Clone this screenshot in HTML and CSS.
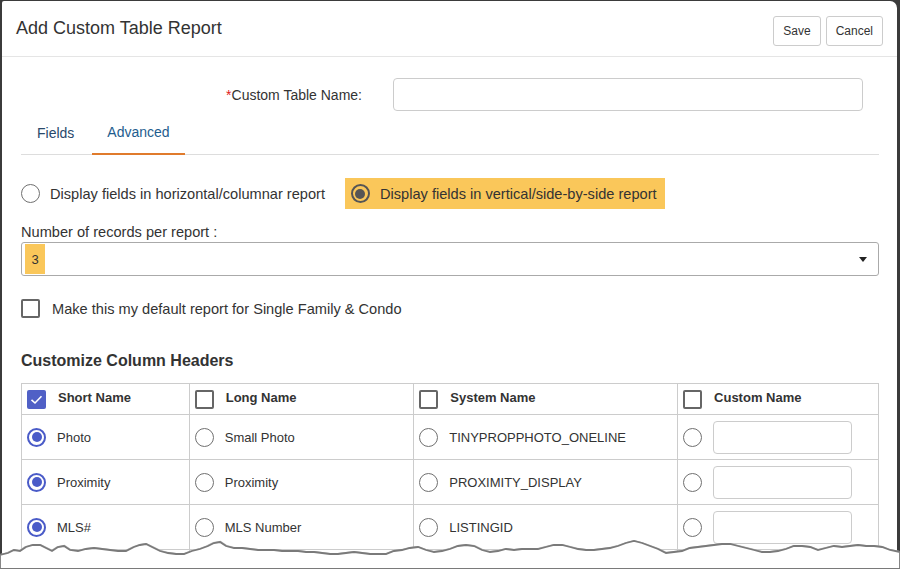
FILE: index.html
```html
<!DOCTYPE html>
<html>
<head>
<meta charset="utf-8">
<link rel="stylesheet" href="styles.css">
</head>
<body>
<div class="frame">
  <div class="modal">
    <div class="modal-header">
      <h1 class="title">Add Custom Table Report</h1>
      <div class="actions">
        <button class="btn">Save</button>
        <button class="btn">Cancel</button>
      </div>
    </div>
    <div class="modal-body">
      <div class="name-row">
        <label class="name-label"><span class="req">*</span>Custom Table Name:</label>
        <input class="text-input name-input" type="text">
      </div>
      <div class="tabs">
        <div class="tab">Fields</div>
        <div class="tab active">Advanced</div>
      </div>
      <div class="layout-row">
        <div class="option"><span class="radio"></span><span>Display fields in horizontal/columnar report</span></div>
        <div class="option hl"><span class="radio dark"></span><span>Display fields in vertical/side-by-side report</span></div>
      </div>
      <div class="records-label">Number of records per report :</div>
      <div class="select">
        <span class="sel-val">3</span>
        <span class="caret"></span>
      </div>
      <div class="default-row">
        <span class="checkbox"></span>
        <span>Make this my default report for Single Family &amp; Condo</span>
      </div>
      <h2 class="section-title">Customize Column Headers</h2>
      <table class="grid">
        <colgroup>
          <col class="c1"><col class="c2"><col class="c3"><col class="c4">
        </colgroup>
        <tr class="head">
          <th><div class="cell"><span class="checkbox checked"><svg viewBox="0 0 19 19" width="19" height="19"><path d="M4.5 9.8 L8 13 L14.5 6.2" fill="none" stroke="#fff" stroke-width="1.6"/></svg></span><span class="htext">Short Name</span></div></th>
          <th><div class="cell"><span class="checkbox"></span><span class="htext">Long Name</span></div></th>
          <th><div class="cell"><span class="checkbox"></span><span class="htext">System Name</span></div></th>
          <th><div class="cell"><span class="checkbox"></span><span class="htext">Custom Name</span></div></th>
        </tr>
        <tr>
          <td><div class="cell"><span class="radio blue"></span><span>Photo</span></div></td>
          <td><div class="cell"><span class="radio"></span><span>Small Photo</span></div></td>
          <td><div class="cell"><span class="radio"></span><span>TINYPROPPHOTO_ONELINE</span></div></td>
          <td><div class="cell"><span class="radio"></span><input class="text-input custom-input" type="text"></div></td>
        </tr>
        <tr>
          <td><div class="cell"><span class="radio blue"></span><span>Proximity</span></div></td>
          <td><div class="cell"><span class="radio"></span><span>Proximity</span></div></td>
          <td><div class="cell"><span class="radio"></span><span>PROXIMITY_DISPLAY</span></div></td>
          <td><div class="cell"><span class="radio"></span><input class="text-input custom-input" type="text"></div></td>
        </tr>
        <tr>
          <td><div class="cell"><span class="radio blue"></span><span>MLS#</span></div></td>
          <td><div class="cell"><span class="radio"></span><span>MLS Number</span></div></td>
          <td><div class="cell"><span class="radio"></span><span>LISTINGID</span></div></td>
          <td><div class="cell"><span class="radio"></span><input class="text-input custom-input" type="text"></div></td>
        </tr>
        <tr>
          <td><div class="cell"></div></td>
          <td><div class="cell"></div></td>
          <td><div class="cell"></div></td>
          <td><div class="cell"></div></td>
        </tr>
      </table>
    </div>
  </div>
  <svg class="torn" viewBox="0 0 900 40" width="900" height="40" preserveAspectRatio="none">
    <polyline class="shadow2" points="0,26 8,24 14,21 20,22 26,18 33,16 40,16 46,19 52,22 58,18 64,17 70,21 78,22 86,20 94,19 102,20 110,21 118,22 126,22 134,18 140,16 146,15 152,18 160,22 168,24 176,25 184,25 192,22 200,20 208,17 214,14 220,13 226,17 234,19 242,19 250,20 258,21 266,21 274,21 282,22 290,22 298,22 306,23 314,23 322,24 330,25 338,25 346,24 354,23 362,24 370,25 378,25 386,25 394,22 402,21 410,19 418,18 426,21 434,23 442,22 450,20 458,17 466,16 474,17 482,21 490,23 498,22 506,20 514,21 522,20 530,20 538,20 546,18 554,16 562,16 570,18 578,20 586,21 594,21 602,20 610,19 618,17 626,14 634,12 642,14 650,17 658,20 666,24 674,23 682,22 690,19 698,18 706,17 714,16 722,15 730,15 738,17 746,19 754,21 762,23 770,23 778,22 786,20 794,17 802,17 810,18 818,21 826,19 834,17 842,18 850,17 858,16 866,17 874,17 882,18 890,21 900,23"/>
    <polygon class="paper" points="0,26 8,24 14,21 20,22 26,18 33,16 40,16 46,19 52,22 58,18 64,17 70,21 78,22 86,20 94,19 102,20 110,21 118,22 126,22 134,18 140,16 146,15 152,18 160,22 168,24 176,25 184,25 192,22 200,20 208,17 214,14 220,13 226,17 234,19 242,19 250,20 258,21 266,21 274,21 282,22 290,22 298,22 306,23 314,23 322,24 330,25 338,25 346,24 354,23 362,24 370,25 378,25 386,25 394,22 402,21 410,19 418,18 426,21 434,23 442,22 450,20 458,17 466,16 474,17 482,21 490,23 498,22 506,20 514,21 522,20 530,20 538,20 546,18 554,16 562,16 570,18 578,20 586,21 594,21 602,20 610,19 618,17 626,14 634,12 642,14 650,17 658,20 666,24 674,23 682,22 690,19 698,18 706,17 714,16 722,15 730,15 738,17 746,19 754,21 762,23 770,23 778,22 786,20 794,17 802,17 810,18 818,21 826,19 834,17 842,18 850,17 858,16 866,17 874,17 882,18 890,21 900,23 900,40 0,40"/>
  </svg>
</div>
</body>
</html>
```

FILE: styles.css
```css
* { box-sizing: border-box; }
html, body {
  margin: 0;
  padding: 0;
  background: #ffffff;
}
body {
  font-family: "Liberation Sans", Arial, sans-serif;
  color: #333333;
}
.frame {
  position: relative;
  width: 900px;
  height: 569px;
  background: #3b3b3b;
  padding: 1px 3px 0 2px;
  overflow: hidden;
}
.modal {
  background: #ffffff;
  height: 568px;
  border-radius: 2px 7px 0 0;
  overflow: hidden;
}
.modal-header {
  display: flex;
  justify-content: space-between;
  align-items: flex-start;
  height: 56px;
  padding: 15px 14px 0 14px;
  border-bottom: 1px solid #e5e5e5;
}
.title {
  margin: 0;
  font-size: 18px;
  font-weight: normal;
  line-height: 24px;
  color: #333333;
}
.actions {
  display: flex;
  gap: 5px;
}
.btn {
  height: 30px;
  padding: 0 9px;
  font-family: "Liberation Sans", Arial, sans-serif;
  font-size: 12px;
  color: #333333;
  background: #ffffff;
  border: 1px solid #cccccc;
  border-radius: 3px;
}
.modal-body {
  padding: 0 17px 0 19px;
}
.name-row {
  display: flex;
  align-items: center;
  gap: 31px;
  margin-top: 21px;
}
.name-label {
  width: 341px;
  text-align: right;
  font-size: 14px;
  color: #333333;
}
.req { color: #e02020; }
.text-input {
  height: 33px;
  border: 1px solid #cccccc;
  border-radius: 4px;
  background: #ffffff;
}
.name-input { width: 470px; }
.tabs {
  display: flex;
  gap: 2px;
  margin-top: 2px;
  border-bottom: 1px solid #dddddd;
  margin-right: 1px;
}
.tab {
  padding: 10px 16px 10px 16px;
  font-size: 14px;
  line-height: 20px;
  color: #29496b;
  margin-bottom: -1px;
  border-bottom: 2px solid transparent;
}
.tab.active {
  color: #1e5d8e;
  padding: 9px 15px 10px 15px;
  border-bottom: 2px solid #e07b2c;
}
.layout-row {
  display: flex;
  align-items: center;
  gap: 20px;
  margin-top: 23px;
  font-size: 14.6px;
}
.option {
  display: flex;
  align-items: center;
  gap: 10px;
  height: 31px;
}
.option.hl {
  background: #fac75a;
  padding: 0 8px 0 6px;
}
.radio {
  width: 19px;
  height: 19px;
  border: 1.5px solid #707070;
  border-radius: 50%;
  flex: none;
  position: relative;
  background: #ffffff;
}
.radio.dark {
  border: 2px solid #555555;
  background: transparent;
}
.radio.dark::after,
.radio.blue::after {
  content: "";
  position: absolute;
  left: 50%;
  top: 50%;
  width: 10px;
  height: 10px;
  margin: -5px 0 0 -5px;
  border-radius: 50%;
  background: #555555;
}
.radio.blue {
  border: 2px solid #4a5bc8;
}
.radio.blue::after { background: #4a5bc8; }
.records-label {
  margin-top: 13px;
  font-size: 14.6px;
  line-height: 20px;
}
.select {
  display: flex;
  align-items: center;
  justify-content: space-between;
  height: 34px;
  margin-top: 0;
  margin-right: 1px;
  border: 1px solid #aaaaaa;
  border-radius: 3px;
  padding: 0 11px 0 3px;
}
.sel-val {
  display: flex;
  align-items: center;
  justify-content: center;
  width: 20px;
  height: 30px;
  background: #fac75a;
  font-size: 13px;
  color: #333333;
}
.caret {
  width: 0;
  height: 0;
  border-left: 4.5px solid transparent;
  border-right: 4.5px solid transparent;
  border-top: 5px solid #222222;
}
.default-row {
  display: flex;
  align-items: center;
  gap: 12px;
  margin-top: 23px;
  font-size: 14.6px;
}
.checkbox {
  width: 19px;
  height: 19px;
  border: 2px solid #666666;
  border-radius: 2px;
  flex: none;
  background: #ffffff;
}
.checkbox svg { display: block; }
.checkbox.checked {
  background: #5060c6;
  border: none;
}
.section-title {
  margin: 33px 0 0 0;
  font-size: 16px;
  line-height: 20px;
  font-weight: bold;
  color: #333333;
}
.grid {
  margin-top: 12px;
  width: 858px;
  border-collapse: collapse;
  font-size: 13px;
}
.c1 { width: 168px; }
.c2 { width: 225px; }
.c3 { width: 264px; }
.c4 { width: 201px; }
.grid th, .grid td {
  border: 1px solid #cccccc;
  padding: 0;
  text-align: left;
  vertical-align: middle;
}
.grid th {
  font-weight: bold;
  height: 31px;
}
.grid td { height: 45px; }
.cell {
  display: flex;
  align-items: center;
  gap: 11px;
  padding-left: 5px;
}
.head .cell { gap: 12px; }
.htext { margin-bottom: 3px; }
.custom-input { width: 139px; }
.torn {
  position: absolute;
  left: 0;
  top: 529px;
  display: block;
}
.paper { fill: #ffffff; stroke: #7a7a7a; stroke-width: 1.8; }
.shadow2 { fill: none; stroke: #bdbdbd; stroke-width: 6; transform: translateY(2px); }
```
